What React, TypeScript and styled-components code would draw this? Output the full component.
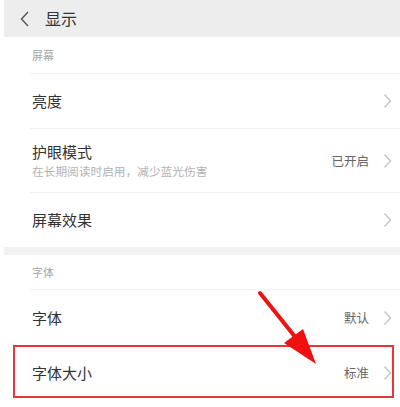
import React from "react";
import styled, { createGlobalStyle } from "styled-components";

const Global = createGlobalStyle`
  html, body { margin: 0; padding: 0; background: #fff; }
  body { font-family: "Noto Sans CJK SC", "Noto Sans", sans-serif; }
`;

const Screen = styled.div`
  position: relative;
  width: 400px;
  height: 407px;
  overflow: hidden;
  background: #fff;
`;

const Content = styled.div`
  margin-left: 4px;
  display: flex;
  flex-direction: column;
`;

const Header = styled.div`
  height: 37px;
  background: #ededed;
  display: flex;
  align-items: center;
  padding-left: 16px;
  gap: 15px;
`;

const Title = styled.div`
  font-size: 16px;
  color: #333;
  line-height: 1;
  margin-top: -1px;
`;

const SectionLabel = styled.div<{ $h: number }>`
  height: ${(p) => p.$h}px;
  margin-left: 26px;
  padding-left: 2px;
  display: flex;
  align-items: center;
  font-size: 11px;
  color: #a5a5a5;
  border-bottom: 1px solid #f1f1f1;
`;

const Row = styled.div<{ $h: number; $last?: boolean }>`
  height: ${(p) => p.$h}px;
  margin-left: 26px;
  padding-left: 2px;
  padding-right: 8px;
  display: flex;
  align-items: center;
  border-bottom: ${(p) => (p.$last ? "none" : "1px solid #f1f1f1")};
`;

const Texts = styled.div`
  flex: 1;
  display: flex;
  flex-direction: column;
  gap: 3px;
`;

const RowTitle = styled.div`
  font-size: 15px;
  color: #333;
  line-height: 18px;
`;

const RowSub = styled.div`
  font-size: 11.7px;
  color: #b3b3b3;
  line-height: 14px;
`;

const Value = styled.div`
  font-size: 12.5px;
  color: #666;
  margin-right: 14px;
`;

const Gap = styled.div`
  height: 8px;
  background: #f2f2f2;
`;

const Bottom = styled.div`
  flex: 1;
  height: 12px;
  background: #f4f4f4;
`;

const Highlight = styled.div`
  position: absolute;
  left: 13px;
  top: 345px;
  width: 377px;
  height: 49px;
  border: 2px solid #e8373b;
  pointer-events: none;
`;

const ArrowSvg = styled.svg`
  position: absolute;
  left: 0;
  top: 0;
  pointer-events: none;
`;

const Chevron = () => (
  <svg width="9" height="16" viewBox="0 0 9 16">
    <polyline points="1.5,1.5 7.5,8 1.5,14.5" fill="none" stroke="#c4c4c4" strokeWidth="1.4" />
  </svg>
);

const Back = () => (
  <svg width="10" height="16" viewBox="0 0 10 16">
    <polyline points="8,1 1.5,8 8,15" fill="none" stroke="#555" strokeWidth="1.4" />
  </svg>
);

export default function App() {
  return (
    <Screen>
      <Global />
      <Content>
        <Header>
          <Back />
          <Title>显示</Title>
        </Header>
        <SectionLabel $h={36}>屏幕</SectionLabel>
        <Row $h={54}>
          <Texts>
            <RowTitle>亮度</RowTitle>
          </Texts>
          <Chevron />
        </Row>
        <Row $h={63}>
          <Texts>
            <RowTitle>护眼模式</RowTitle>
            <RowSub>在长期阅读时启用，减少蓝光伤害</RowSub>
          </Texts>
          <Value>已开启</Value>
          <Chevron />
        </Row>
        <Row $h={54} $last>
          <Texts>
            <RowTitle>屏幕效果</RowTitle>
          </Texts>
          <Chevron />
        </Row>
        <Gap />
        <SectionLabel $h={34}>字体</SectionLabel>
        <Row $h={55}>
          <Texts>
            <RowTitle>字体</RowTitle>
          </Texts>
          <Value>默认</Value>
          <Chevron />
        </Row>
        <Row $h={53} $last>
          <Texts>
            <RowTitle>字体大小</RowTitle>
          </Texts>
          <Value>标准</Value>
          <Chevron />
        </Row>
        <Bottom />
      </Content>
      <Highlight />
      <ArrowSvg width="400" height="407" viewBox="0 0 400 407">
        <line x1="260" y1="293" x2="296" y2="338" stroke="#f01010" strokeWidth="4" strokeLinecap="round" />
        <polygon points="284,343 303,329 316,364" fill="#f01010" />
      </ArrowSvg>
    </Screen>
  );
}
